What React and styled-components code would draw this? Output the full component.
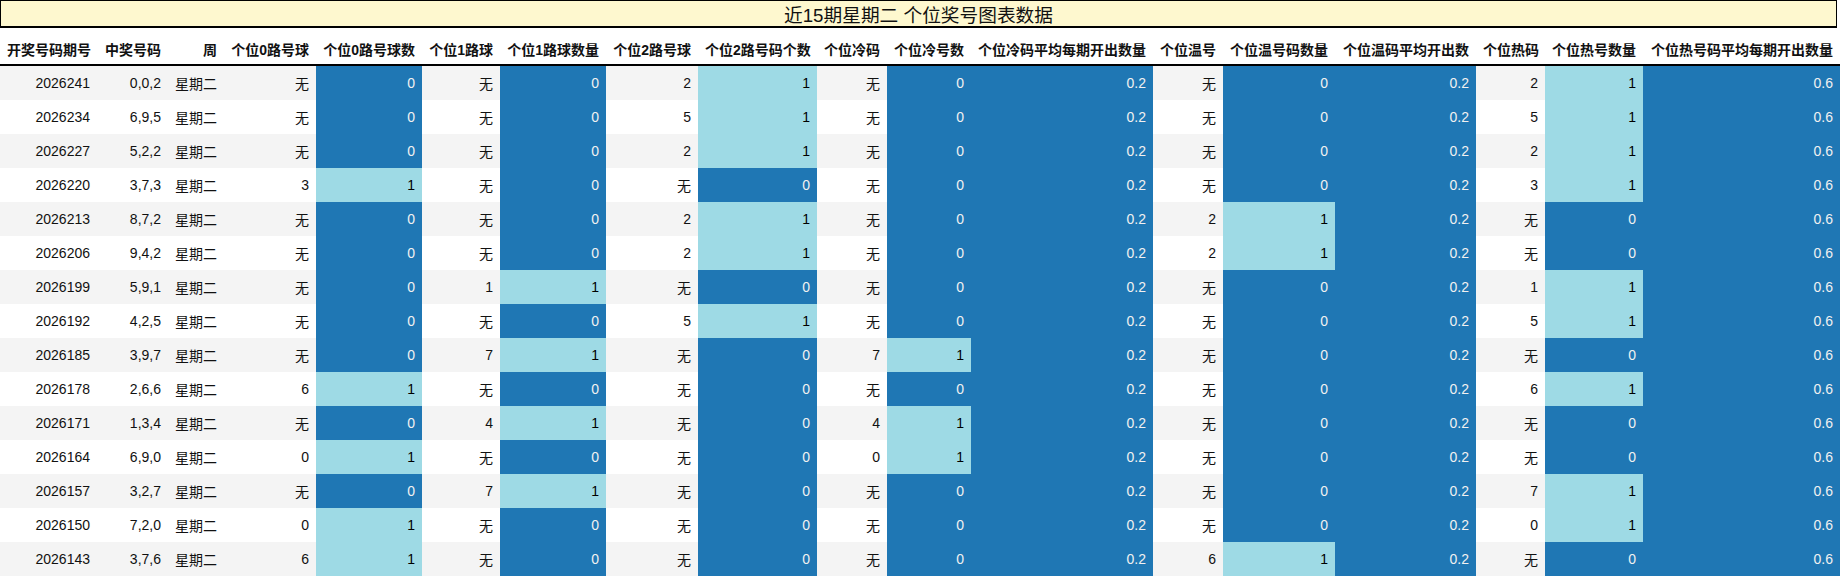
import styled, { createGlobalStyle } from "styled-components";

const GlobalStyle = createGlobalStyle`
  body {
    margin: 0;
    background: #fff;
    font-family: "Liberation Sans", "Noto Sans CJK SC", sans-serif;
  }
`;

const Sheet = styled.div`
  width: 1840px;
`;

const Title = styled.div`
  width: 1837px;
  height: 28px;
  box-sizing: border-box;
  border: 1px solid #000;
  border-bottom-width: 2px;
  background: #fef8cf;
  display: flex;
  align-items: center;
  justify-content: center;
  font-size: 18.7px;
  color: #111;
`;

const Table = styled.table`
  width: 1840px;
  border-collapse: collapse;
  table-layout: fixed;
`;

const HeadCell = styled.th`
  height: 31px;
  padding: 5px 7px 0;
  border-bottom: 2px solid #000;
  font-size: 14px;
  font-weight: 700;
  color: #111;
  text-align: right;
  white-space: nowrap;
  background: #fff;
`;

const Row = styled.tr`
  background: ${(p) => (p.$odd ? "#f4f4f4" : "#fff")};
`;

const tones = {
  dark: { bg: "#1f77b4", fg: "#f1f1f1" },
  light: { bg: "#9edae5", fg: "#000" },
};

const Cell = styled.td`
  height: 34px;
  padding: 0 7px;
  font-size: 14px;
  text-align: right;
  white-space: nowrap;
  color: ${(p) => (p.$tone ? tones[p.$tone].fg : "#111")};
  background: ${(p) => (p.$tone ? tones[p.$tone].bg : "transparent")};
`;

const widths = [97, 71, 56, 92, 106, 78, 106, 92, 119, 70, 84, 182, 70, 112, 141, 69, 98, 197];

const headers = [
  "开奖号码期号",
  "中奖号码",
  "周",
  "个位0路号球",
  "个位0路号球数",
  "个位1路球",
  "个位1路球数量",
  "个位2路号球",
  "个位2路号码个数",
  "个位冷码",
  "个位冷号数",
  "个位冷码平均每期开出数量",
  "个位温号",
  "个位温号码数量",
  "个位温码平均开出数",
  "个位热码",
  "个位热号数量",
  "个位热号码平均每期开出数量",
];

// 期号, 中奖号码, 0路, 1路, 2路, 冷, 温, 热 (无 = not drawn)
const draws = [
  ["2026241", "0,0,2", "无", "无", "2", "无", "无", "2"],
  ["2026234", "6,9,5", "无", "无", "5", "无", "无", "5"],
  ["2026227", "5,2,2", "无", "无", "2", "无", "无", "2"],
  ["2026220", "3,7,3", "3", "无", "无", "无", "无", "3"],
  ["2026213", "8,7,2", "无", "无", "2", "无", "2", "无"],
  ["2026206", "9,4,2", "无", "无", "2", "无", "2", "无"],
  ["2026199", "5,9,1", "无", "1", "无", "无", "无", "1"],
  ["2026192", "4,2,5", "无", "无", "5", "无", "无", "5"],
  ["2026185", "3,9,7", "无", "7", "无", "7", "无", "无"],
  ["2026178", "2,6,6", "6", "无", "无", "无", "无", "6"],
  ["2026171", "1,3,4", "无", "4", "无", "4", "无", "无"],
  ["2026164", "6,9,0", "0", "无", "无", "0", "无", "无"],
  ["2026157", "3,2,7", "无", "7", "无", "无", "无", "7"],
  ["2026150", "7,2,0", "0", "无", "无", "无", "无", "0"],
  ["2026143", "3,7,6", "6", "无", "无", "无", "6", "无"],
];

function countCell(v) {
  const n = v === "无" ? 0 : 1;
  return { text: String(n), tone: n ? "light" : "dark" };
}

function buildRow([issue, nums, r0, r1, r2, cold, warm, hot]) {
  const plain = (text) => ({ text });
  const avg = (text) => ({ text, tone: "dark" });
  return [
    plain(issue),
    plain(nums),
    plain("星期二"),
    plain(r0),
    countCell(r0),
    plain(r1),
    countCell(r1),
    plain(r2),
    countCell(r2),
    plain(cold),
    countCell(cold),
    avg("0.2"),
    plain(warm),
    countCell(warm),
    avg("0.2"),
    plain(hot),
    countCell(hot),
    avg("0.6"),
  ];
}

export default function App() {
  return (
    <Sheet>
      <GlobalStyle />
      <Title>近15期星期二 个位奖号图表数据</Title>
      <Table>
        <colgroup>
          {widths.map((w, i) => (
            <col key={i} style={{ width: w }} />
          ))}
        </colgroup>
        <thead>
          <tr>
            {headers.map((h) => (
              <HeadCell key={h}>{h}</HeadCell>
            ))}
          </tr>
        </thead>
        <tbody>
          {draws.map((d, i) => (
            <Row key={d[0]} $odd={i % 2 === 0}>
              {buildRow(d).map((c, j) => (
                <Cell key={j} $tone={c.tone}>
                  {c.text}
                </Cell>
              ))}
            </Row>
          ))}
        </tbody>
      </Table>
    </Sheet>
  );
}
